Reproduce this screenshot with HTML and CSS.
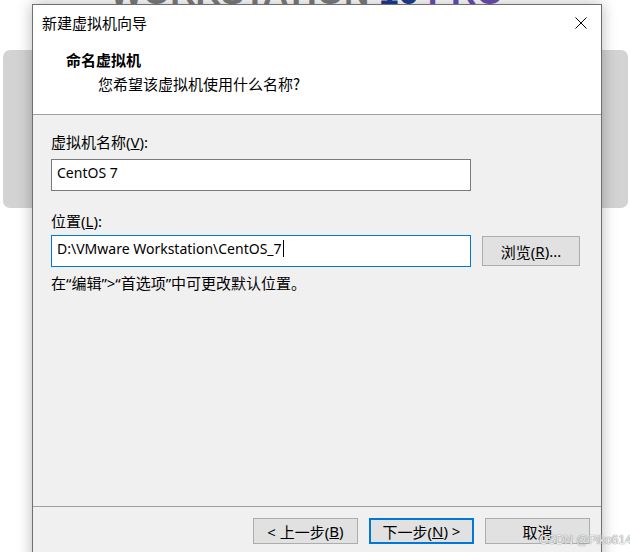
FILE: index.html
```html
<!DOCTYPE html>
<html lang="zh-CN">
<head>
<meta charset="utf-8">
<title>新建虚拟机向导</title>
<link rel="stylesheet" href="styles.css">
</head>
<body>
<div class="backdrop">
  <div class="logo"><span class="logo-ws">WORKSTATION</span> <span class="logo-num">16</span> <span class="logo-pro">PRO</span><span class="logo-tm">™</span></div>
  <div class="panel"></div>
</div>

<div class="dialog">
  <div class="header">
    <div class="titlebar">
      <span class="title">新建虚拟机向导</span>
      <svg class="close" width="12" height="12" viewBox="0 0 12 12"><path d="M0.5 0.5 L11.5 11.5 M11.5 0.5 L0.5 11.5" stroke="#000" stroke-width="1" fill="none"/></svg>
    </div>
    <div class="heading">命名虚拟机</div>
    <div class="subheading">您希望该虚拟机使用什么名称?</div>
  </div>

  <div class="content">
    <div class="label label-first">虚拟机名称(<u>V</u>):</div>
    <div class="field">CentOS 7</div>
    <div class="label label-second">位置(<u>L</u>):</div>
    <div class="row">
      <div class="field field-focus">D:\VMware Workstation\CentOS_7<span class="caret"></span></div>
      <div class="btn btn-browse">浏览(<u>R</u>)...</div>
    </div>
    <div class="hint">在“编辑”&gt;“首选项”中可更改默认位置。</div>
  </div>

  <div class="footer">
    <div class="btn btn-foot">&lt; 上一步(<u>B</u>)</div>
    <div class="btn btn-foot btn-default">下一步(<u>N</u>) &gt;</div>
    <div class="btn btn-foot">取消</div>
  </div>
</div>

<div class="watermark">CSDN @Piko614</div>
</body>
</html>
```

FILE: styles.css
```css
html, body {
  margin: 0;
  padding: 0;
}

body {
  width: 630px;
  height: 552px;
  background: #ffffff;
  overflow: hidden;
  position: relative;
  font-family: "Segoe UI", "Noto Sans", "Noto Sans CJK SC", sans-serif;
  font-size: 15px;
  color: #000;
}

.backdrop {
  position: absolute;
  left: 0;
  top: 0;
  width: 630px;
  height: 552px;
}

.logo {
  position: absolute;
  left: 110px;
  top: -26px;
  font-family: "Liberation Sans", sans-serif;
  font-size: 35px;
  line-height: 35px;
  font-weight: bold;
  white-space: nowrap;
}

.logo-ws { color: #7d7d7d; }
.logo-num { color: #1d3d8f; }
.logo-pro { color: #6a4eb5; }
.logo-tm { color: #555; font-size: 12px; vertical-align: top; }

.panel {
  position: absolute;
  left: 3px;
  top: 50px;
  width: 625px;
  height: 158px;
  border-radius: 7px;
  background: #d3d3d3;
}

.dialog {
  position: absolute;
  left: 32px;
  top: 4px;
  width: 568px;
  height: 570px;
  border: 1px solid #6f6f6f;
  background: #f0f0f0;
  box-shadow: 0 0 14px rgba(0, 0, 0, 0.28);
  display: flex;
  flex-direction: column;
}

.header {
  background: #ffffff;
  height: 109px;
  border-bottom: 1px solid #a0a0a0;
  display: flex;
  flex-direction: column;
}

.titlebar {
  height: 36px;
  display: flex;
  align-items: center;
  justify-content: space-between;
  padding-left: 9px;
  padding-right: 14px;
}

.title {
  font-family: "Noto Sans CJK SC", sans-serif;
  font-size: 15px;
  line-height: 20px;
}

.close {
  display: block;
}

.heading {
  font-family: "Noto Sans CJK SC", sans-serif;
  font-weight: bold;
  font-size: 15px;
  line-height: 20px;
  margin-top: 9px;
  padding-left: 33px;
}

.subheading {
  font-family: "Noto Sans CJK SC", sans-serif;
  font-size: 15px;
  line-height: 20px;
  margin-top: 4px;
  padding-left: 65px;
}

.content {
  height: 391px;
  padding-left: 18px;
  box-sizing: border-box;
  display: flex;
  flex-direction: column;
  align-items: flex-start;
}

.label {
  line-height: 20px;
}

.label-first { margin-top: 17px; }
.label-second { margin-top: 20px; }

.field {
  margin-top: 7px;
  width: 420px;
  height: 32px;
  box-sizing: border-box;
  border: 1px solid #7a7a7a;
  background: #ffffff;
  padding-left: 5px;
  padding-bottom: 6px;
  display: flex;
  align-items: center;
  white-space: nowrap;
  font-size: 14px;
}

.row {
  margin-top: 4px;
  display: flex;
  align-items: center;
  gap: 11px;
}

.row .field {
  margin-top: 0;
}

.field-focus {
  border-color: #0078d7;
}

.caret {
  display: inline-block;
  width: 1px;
  height: 17px;
  background: #000;
  margin-left: 1px;
}

.btn {
  box-sizing: border-box;
  background: #e1e1e1;
  border: 1px solid #adadad;
  display: flex;
  align-items: center;
  justify-content: center;
  white-space: nowrap;
}

.btn-browse {
  width: 98px;
  height: 30px;
}

.hint {
  margin-top: 6px;
  line-height: 20px;
}

.footer {
  border-top: 1px solid #a0a0a0;
  padding-top: 11px;
  padding-right: 11px;
  display: flex;
  justify-content: flex-end;
  gap: 11px;
}

.btn-foot {
  width: 105px;
  height: 26px;
}

.btn-default {
  border: 2px solid #0078d7;
}

.watermark {
  position: absolute;
  left: 539px;
  top: 533px;
  font-family: "Liberation Sans", sans-serif;
  font-size: 12px;
  line-height: 14px;
  color: rgba(255, 255, 255, 0.85);
  text-shadow: 0 0 1px #8a8a8a, 0 0 1px #8a8a8a;
  white-space: nowrap;
}
```
